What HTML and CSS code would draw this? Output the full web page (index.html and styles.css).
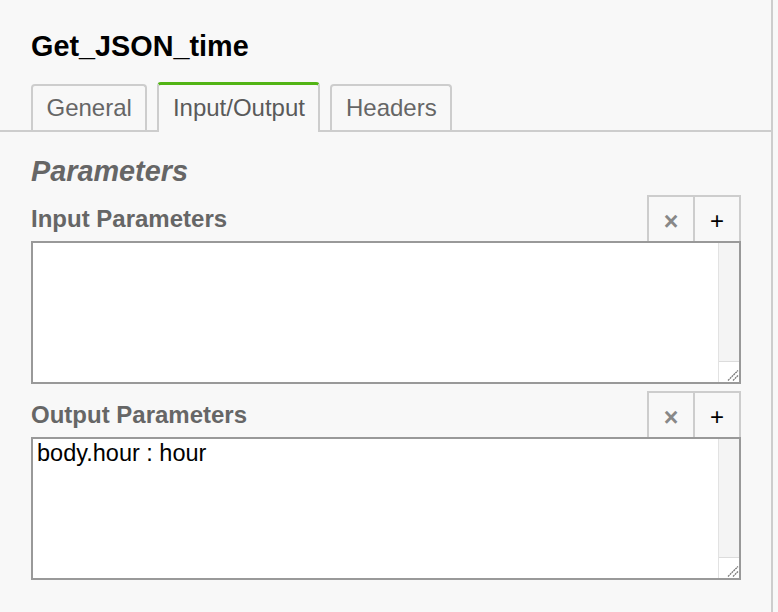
FILE: index.html
```html
<!DOCTYPE html>
<html>
<head>
<meta charset="utf-8">
<link rel="stylesheet" href="styles.css">
</head>
<body>
<div class="panel">
  <div class="header">
    <div class="title">Get_JSON_time</div>
  </div>
  <div class="tabs">
    <div class="tab">General</div>
    <div class="tab active">Input/Output</div>
    <div class="tab">Headers</div>
  </div>
  <div class="content">
    <div class="section-title">Parameters</div>
    <div class="group">
      <div class="group-head">
        <div class="label">Input Parameters</div>
        <div class="actions">
          <div class="btn clear">×</div>
          <div class="btn add">+</div>
        </div>
      </div>
      <div class="box">
        <div class="text"></div>
        <div class="scroll">
          <div class="track"></div>
          <div class="resizer">
            <svg width="20" height="20" viewBox="0 0 20 20"><path d="M9 18.5 L19 8.5 M14 18.5 L19 13.5" stroke="#777" stroke-width="1.3" stroke-dasharray="2 0.6" fill="none"/></svg>
          </div>
        </div>
      </div>
    </div>
    <div class="group second">
      <div class="group-head">
        <div class="label">Output Parameters</div>
        <div class="actions">
          <div class="btn clear">×</div>
          <div class="btn add">+</div>
        </div>
      </div>
      <div class="box">
        <div class="text">body.hour : hour</div>
        <div class="scroll">
          <div class="track"></div>
          <div class="resizer">
            <svg width="20" height="20" viewBox="0 0 20 20"><path d="M9 18.5 L19 8.5 M14 18.5 L19 13.5" stroke="#777" stroke-width="1.3" stroke-dasharray="2 0.6" fill="none"/></svg>
          </div>
        </div>
      </div>
    </div>
  </div>
</div>
</body>
</html>
```

FILE: styles.css
```css
html, body {
  margin: 0;
  padding: 0;
  background: #f8f8f8;
}
body {
  font-family: "Liberation Sans", Arial, sans-serif;
}
.panel {
  width: 773px;
  height: 612px;
  box-sizing: border-box;
  border-right: 2px solid #cdcdcd;
  background: #f8f8f8;
}
.header {
  padding: 30px 31px 0;
}
.title {
  font-size: 28.8px;
  line-height: 33px;
  font-weight: bold;
  color: #000;
}
.tabs {
  margin-top: 19px;
  display: flex;
  align-items: flex-end;
  gap: 10px;
  padding-left: 31px;
  border-bottom: 2px solid #cdcdcd;
}
.tab {
  border: 2px solid #cdcdcd;
  border-bottom: none;
  border-radius: 4px 4px 0 0;
  padding: 10px 13.5px;
  font-size: 24px;
  line-height: 24px;
  color: #666;
  background: #f8f8f8;
}
.tab.active {
  border-top: 3px solid #52b415;
  padding: 11px 13.5px 12px;
  margin-bottom: -2px;
  color: #5a5a5a;
}
.content {
  padding: 0 30px 0 31px;
}
.section-title {
  margin-top: 23px;
  font-size: 28.8px;
  line-height: 33px;
  font-weight: bold;
  font-style: italic;
  color: #666;
}
.group {
  margin-top: 7px;
}
.group.second {
  margin-top: 7px;
}
.group-head {
  display: flex;
  align-items: flex-end;
  justify-content: space-between;
}
.label {
  font-size: 24px;
  line-height: 24px;
  font-weight: bold;
  color: #666;
  padding-bottom: 10px;
}
.actions {
  display: flex;
}
.btn {
  width: 48px;
  height: 46px;
  box-sizing: border-box;
  border: 2px solid #cdcdcd;
  border-bottom: none;
  display: flex;
  align-items: center;
  justify-content: center;
  font-size: 24px;
  line-height: 24px;
  padding-top: 4px;
}
.btn + .btn {
  margin-left: -2px;
}
.btn.clear {
  color: #888;
  font-weight: bold;
  font-size: 25px;
}
.btn.add {
  color: #000;
}
.box {
  height: 143px;
  box-sizing: border-box;
  border: 2px solid #999;
  background: #fff;
  display: flex;
}
.text {
  flex: 1;
  padding: 1px 4px;
  font-size: 23.5px;
  line-height: 27px;
  color: #000;
}
.scroll {
  width: 21px;
  box-sizing: border-box;
  border-left: 1px solid #e2e2e2;
  display: flex;
  flex-direction: column;
}
.track {
  flex: 1;
  background: #f4f4f4;
}
.resizer {
  height: 21px;
  box-sizing: border-box;
  border-top: 1px solid #dcdcdc;
  background: #fff;
  display: flex;
}
.resizer svg {
  display: block;
}
```
